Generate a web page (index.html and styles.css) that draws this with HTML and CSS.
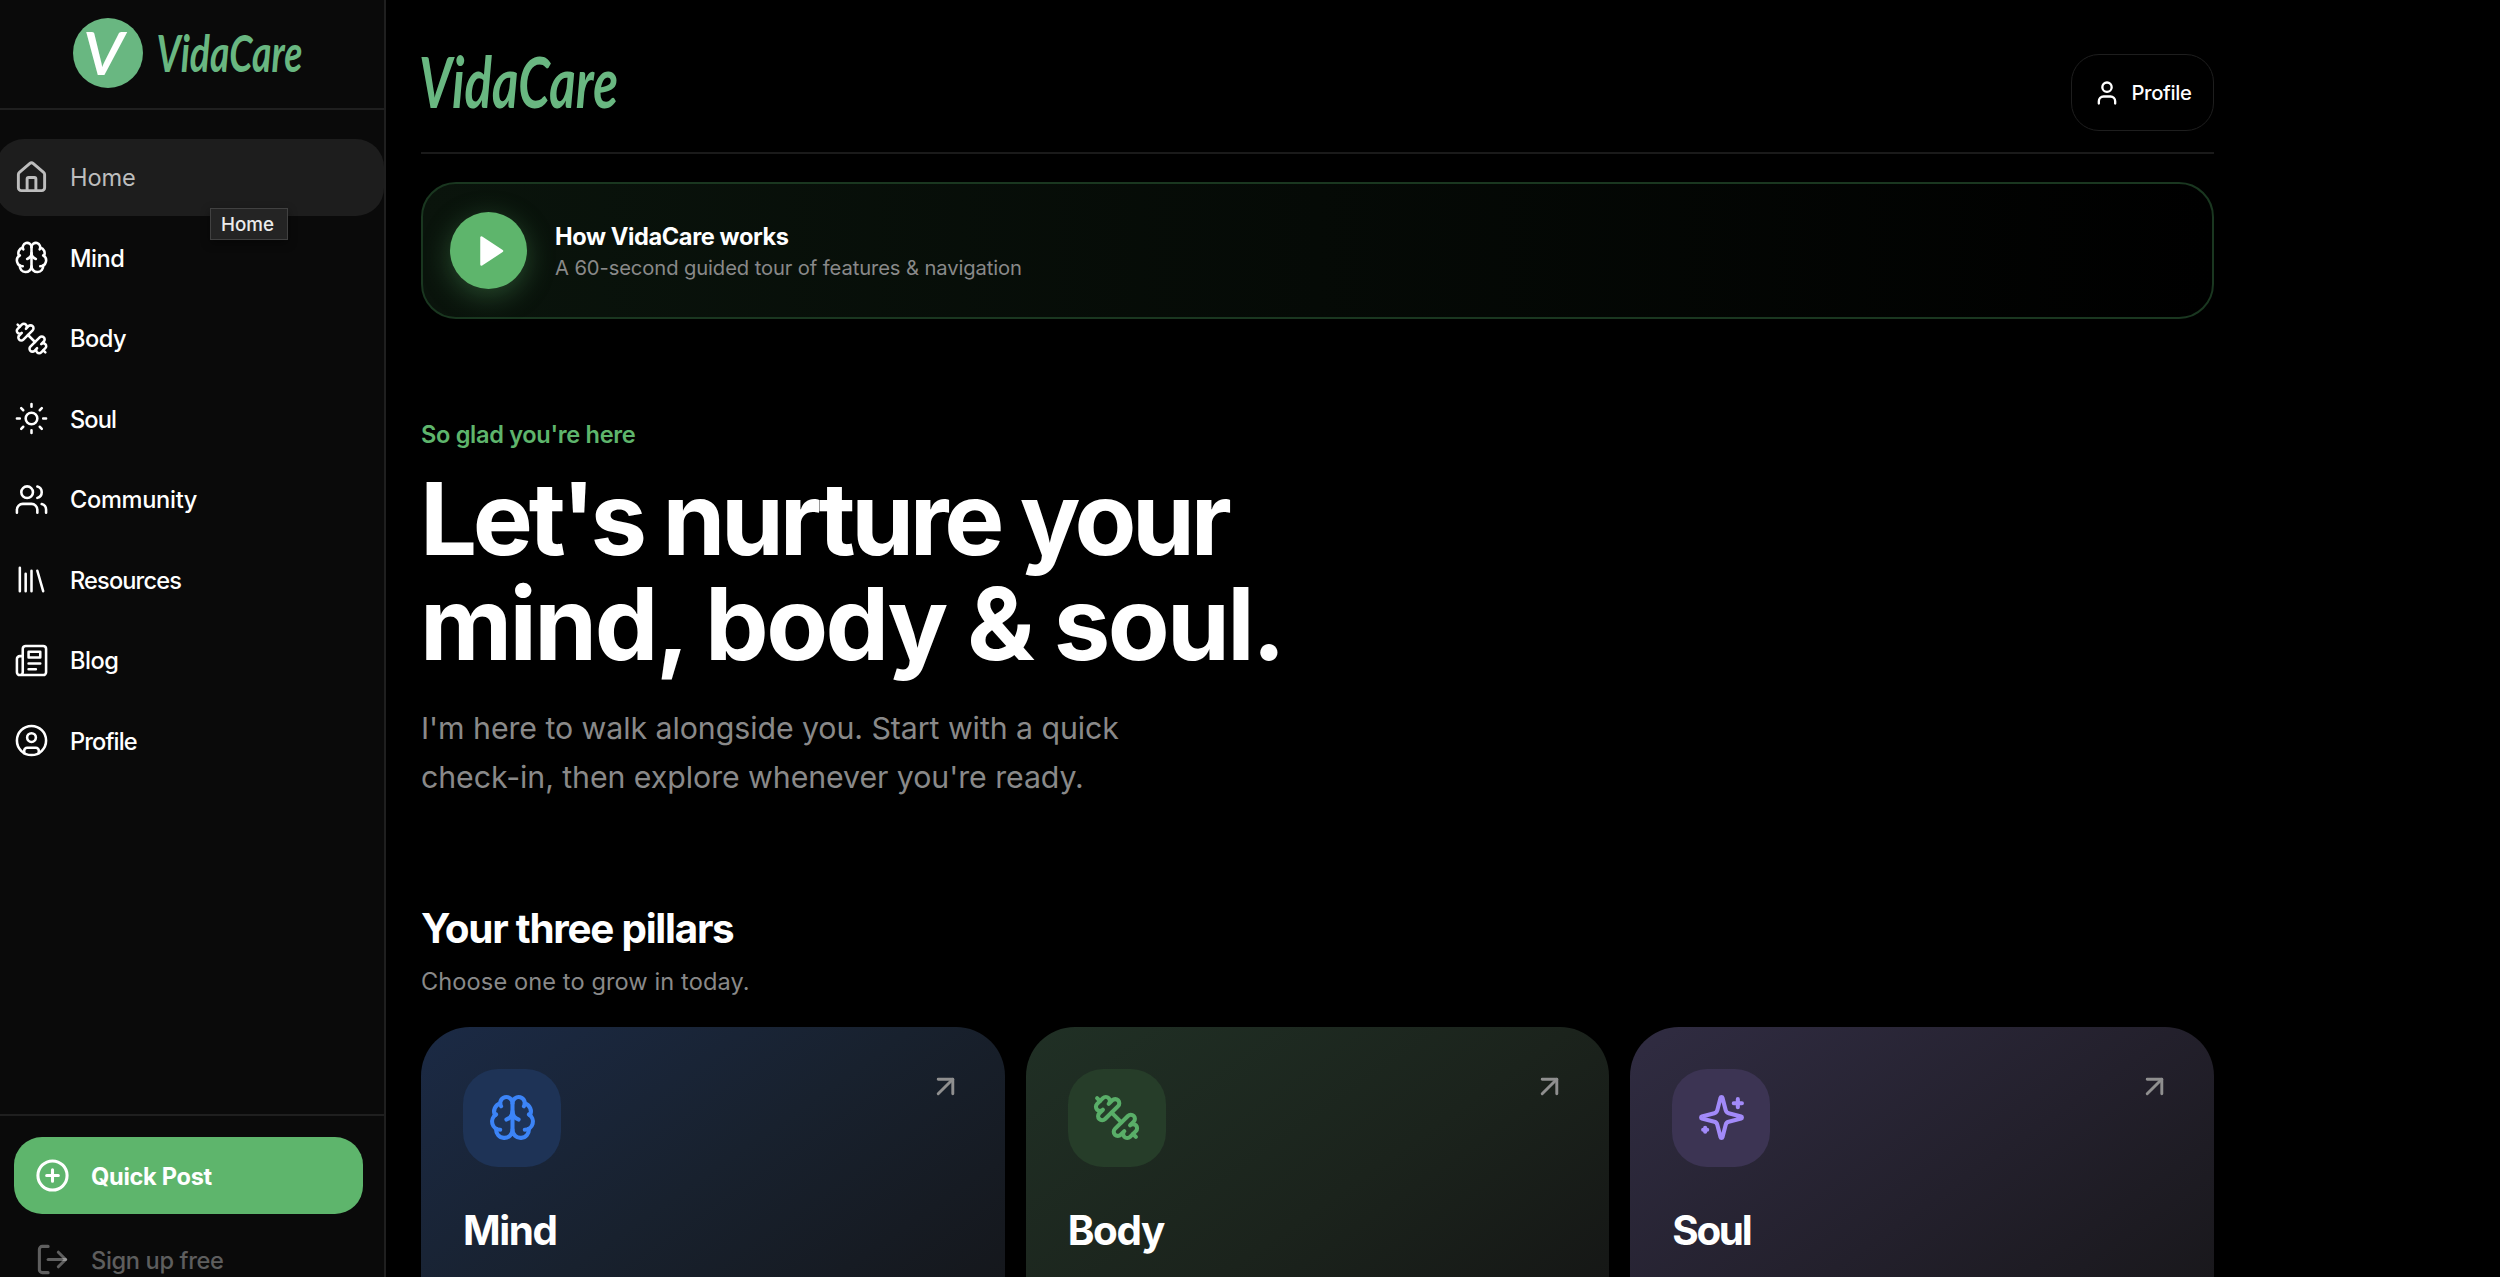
FILE: index.html
```html
<!DOCTYPE html>
<html lang="en">
<head>
<meta charset="utf-8">
<title>VidaCare</title>
<link rel="stylesheet" href="styles.css">
</head>
<body>
<svg class="sprite" aria-hidden="true">
  <symbol id="brain" viewBox="0 0 24 24"><path d="M12 18V5"/><path d="M15 13a4.17 4.17 0 0 1-3-4 4.17 4.17 0 0 1-3 4"/><path d="M17.598 6.5A3 3 0 1 0 12 5a3 3 0 1 0-5.598 1.5"/><path d="M17.997 5.125a4 4 0 0 1 2.526 5.77"/><path d="M18 18a4 4 0 0 0 2-7.464"/><path d="M19.967 17.483A4 4 0 1 1 12 18a4 4 0 1 1-7.967-.517"/><path d="M6 18a4 4 0 0 1-2-7.464"/><path d="M6.003 5.125a4 4 0 0 0-2.526 5.77"/></symbol>
  <symbol id="dumbbell" viewBox="0 0 24 24"><path d="M14.4 14.4 9.6 9.6"/><path d="M18.657 21.485a2 2 0 1 1-2.829-2.828l-1.767 1.768a2 2 0 1 1-2.829-2.829l6.364-6.364a2 2 0 1 1 2.829 2.829l-1.768 1.767a2 2 0 1 1 2.828 2.829z"/><path d="m21.5 21.5-1.4-1.4"/><path d="M3.9 3.9 2.5 2.5"/><path d="M6.404 12.768a2 2 0 1 1-2.829-2.829l1.768-1.767a2 2 0 1 1-2.828-2.829l2.828-2.828a2 2 0 1 1 2.829 2.828l1.767-1.768a2 2 0 1 1 2.829 2.829z"/></symbol>
  <symbol id="arrow" viewBox="0 0 24 24"><path d="M7 7h10v10"/><path d="M7 17 17 7"/></symbol>
</svg>
<div class="app">
  <aside class="sidebar">
    <div class="brand">
      <svg class="brand-mark" viewBox="0 0 70 70"><circle cx="35" cy="35" r="35"/><text x="10" y="57" textLength="41" lengthAdjust="spacingAndGlyphs">V</text></svg>
      <svg class="brand-word" viewBox="0 0 198 60"><text x="-2" y="54" textLength="199" lengthAdjust="spacingAndGlyphs">VidaCare</text></svg>
    </div>
    <nav class="nav">
      <a class="nav-item active"><svg class="icon" viewBox="0 0 24 24"><path d="M15 21v-8a1 1 0 0 0-1-1h-4a1 1 0 0 0-1 1v8"/><path d="M3 10a2 2 0 0 1 .709-1.528l7-5.999a2 2 0 0 1 2.582 0l7 5.999A2 2 0 0 1 21 10v9a2 2 0 0 1-2 2H5a2 2 0 0 1-2-2z"/></svg><span>Home</span></a>
      <a class="nav-item"><svg class="icon"><use href="#brain"/></svg><span>Mind</span></a>
      <a class="nav-item"><svg class="icon"><use href="#dumbbell"/></svg><span>Body</span></a>
      <a class="nav-item"><svg class="icon" viewBox="0 0 24 24"><circle cx="12" cy="12" r="4"/><path d="M12 2v2M12 20v2M4.93 4.93l1.41 1.41M17.66 17.66l1.41 1.41M2 12h2M20 12h2M6.34 17.66l-1.41 1.41M19.07 4.93l-1.41 1.41"/></svg><span class="tight">Soul</span></a>
      <a class="nav-item"><svg class="icon" viewBox="0 0 24 24"><path d="M16 21v-2a4 4 0 0 0-4-4H6a4 4 0 0 0-4 4v2"/><circle cx="9" cy="7" r="4"/><path d="M22 21v-2a4 4 0 0 0-3-3.87"/><path d="M16 3.13a4 4 0 0 1 0 7.75"/></svg><span class="wide">Community</span></a>
      <a class="nav-item"><svg class="icon" viewBox="0 0 24 24"><path d="m16 6 4 14M12 6v14M8 8v12M4 4v16"/></svg><span class="tight">Resources</span></a>
      <a class="nav-item"><svg class="icon" viewBox="0 0 24 24"><path d="M4 22h16a2 2 0 0 0 2-2V4a2 2 0 0 0-2-2H8a2 2 0 0 0-2 2v16a2 2 0 0 1-2 2Zm0 0a2 2 0 0 1-2-2v-9c0-1.1.9-2 2-2h2"/><path d="M18 14h-8M15 18h-5M10 6h8v4h-8V6Z"/></svg><span>Blog</span></a>
      <a class="nav-item"><svg class="icon" viewBox="0 0 24 24"><circle cx="12" cy="12" r="10"/><circle cx="12" cy="10" r="3"/><path d="M7 20.662V19a2 2 0 0 1 2-2h6a2 2 0 0 1 2 2v1.662"/></svg><span class="tight">Profile</span></a>
    </nav>
    <div class="tooltip">Home</div>
    <div class="sidebar-foot">
      <a class="foot-item quick"><svg class="icon" viewBox="0 0 24 24"><circle cx="12" cy="12" r="10"/><path d="M8 12h8M12 8v8"/></svg><span>Quick Post</span></a>
      <a class="foot-item signup"><svg class="icon" viewBox="0 0 24 24"><path d="m16 17 5-5-5-5"/><path d="M21 12H9"/><path d="M9 21H5a2 2 0 0 1-2-2V5a2 2 0 0 1 2-2h4"/></svg><span>Sign up free</span></a>
    </div>
  </aside>
  <main class="main">
    <header class="topbar">
      <svg class="wordmark" viewBox="0 0 198 60"><text x="-2" y="54" textLength="199" lengthAdjust="spacingAndGlyphs">VidaCare</text></svg>
      <a class="profile-btn"><svg class="icon" viewBox="0 0 24 24"><path d="M19 21v-2a4 4 0 0 0-4-4H9a4 4 0 0 0-4 4v2"/><circle cx="12" cy="7" r="4"/></svg><span>Profile</span></a>
    </header>
    <section class="tour">
      <div class="play"><svg viewBox="0 0 77 77"><path d="M31.5 25.5v27L52 39z"/></svg></div>
      <div class="tour-text">
        <h3>How VidaCare works</h3>
        <p>A 60-second guided tour of features &amp; navigation</p>
      </div>
    </section>
    <section class="hero">
      <p class="eyebrow">So glad you're here</p>
      <h1><span class="line-a">Let's nurture your</span><span class="line-b">mind, body &amp; soul.</span></h1>
      <p class="lead">I'm here to walk alongside you. Start with a quick<br>check-in, then explore whenever you're ready.</p>
    </section>
    <section class="pillars">
      <h2>Your three pillars</h2>
      <p class="hint">Choose one to grow in today.</p>
      <div class="cards">
        <article class="card mind">
          <div class="card-top"><div class="tile"><svg class="icon"><use href="#brain"/></svg></div><svg class="icon go"><use href="#arrow"/></svg></div>
          <h3>Mind</h3>
        </article>
        <article class="card body">
          <div class="card-top"><div class="tile"><svg class="icon"><use href="#dumbbell"/></svg></div><svg class="icon go"><use href="#arrow"/></svg></div>
          <h3>Body</h3>
        </article>
        <article class="card soul">
          <div class="card-top"><div class="tile"><svg class="icon" viewBox="0 0 24 24"><path d="M9.937 15.5A2 2 0 0 0 8.5 14.063l-6.135-1.582a.5.5 0 0 1 0-.962L8.5 9.936A2 2 0 0 0 9.937 8.5l1.582-6.135a.5.5 0 0 1 .963 0L14.063 8.5A2 2 0 0 0 15.5 9.937l6.135 1.581a.5.5 0 0 1 0 .964L15.5 14.063a2 2 0 0 0-1.437 1.437l-1.582 6.135a.5.5 0 0 1-.963 0z"/><path d="M20 3v4M22 5h-4M4 17v2M5 18H3"/></svg></div><svg class="icon go"><use href="#arrow"/></svg></div>
          <h3>Soul</h3>
        </article>
      </div>
    </section>
  </main>
</div>
</body>
</html>
```
FILE: styles.css
```css
* { box-sizing: border-box; margin: 0; padding: 0; }
body {
  background: #000;
  color: #fff;
  font-family: Inter, "Liberation Sans", sans-serif;
  overflow: hidden;
}
.sprite { display: none; }
.app { display: flex; height: 1277px; overflow: hidden; }
.icon {
  width: 35px;
  height: 35px;
  flex: none;
  fill: none;
  stroke: currentColor;
  stroke-width: 1.75;
  stroke-linecap: round;
  stroke-linejoin: round;
}

.sidebar {
  position: relative;
  display: flex;
  flex-direction: column;
  flex: none;
  width: 386px;
  height: 1277px;
  background: #0a0a0a;
  border-right: 2px solid #1f1f1f;
}
.brand {
  display: flex;
  flex: none;
  height: 110px;
  padding: 18px 0 0 73px;
  gap: 14px;
  border-bottom: 2px solid #1f1f1f;
}
.brand-mark { width: 70px; height: 70px; }
.brand-mark circle { fill: #69b781; }
.brand-mark text { fill: #fff; font: italic 600 60px Lato, sans-serif; }
.brand-word { width: 147px; height: 44px; margin-top: 14px; }
.brand-word text, .wordmark text { fill: #69b781; font: italic 700 70px Lato, sans-serif; }
.brand-word, .wordmark { overflow: visible; }

.nav { display: flex; flex-direction: column; gap: 3.5px; padding-top: 28.5px; }
.nav-item {
  display: flex;
  align-items: center;
  height: 77px;
  margin-left: -4px;
  padding-left: 18px;
  gap: 21px;
  border-radius: 28px;
  font-size: 23.6px;
  font-weight: 500;
  letter-spacing: -0.02em;
}
.nav-item span { padding-top: 1px; }
.nav-item .tight { letter-spacing: -0.037em; }
.nav-item .wide { letter-spacing: -0.013em; }
.nav-item.active { background: #1d1d1d; color: #bdbdbd; font-weight: 400; letter-spacing: -0.005em; }
.active .icon { stroke-width: 2; }
.tooltip {
  position: absolute;
  left: 210px;
  top: 208px;
  width: 78px;
  height: 32px;
  border: 1px solid #414141;
  background: #242424;
  color: #ececec;
  font-size: 18.8px;
  font-weight: 500;
  line-height: 31px;
  padding-right: 3px;
  text-align: center;
  box-shadow: 0 3px 10px rgba(0, 0, 0, .4);
}
.sidebar-foot {
  display: flex;
  flex-direction: column;
  flex: none;
  height: 163px;
  margin-top: auto;
  padding: 21px 21px 0 14px;
  gap: 7px;
  border-top: 2px solid #1f1f1f;
  overflow: hidden;
}
.foot-item {
  display: flex;
  align-items: center;
  flex: none;
  height: 77px;
  padding-left: 21px;
  gap: 21px;
  border-radius: 28px;
  font-size: 23.6px;
  font-weight: 500;
}
.foot-item .icon { stroke-width: 2.1; }
.foot-item span { padding-top: 1px; }
.quick { background: #5eb56c; font-weight: 700; letter-spacing: -0.013em; }
.signup { color: rgba(255, 255, 255, .35); letter-spacing: -0.0145em; }

.main { width: 1828px; padding: 54px 0 0 35px; }
.topbar {
  display: flex;
  justify-content: space-between;
  height: 100px;
  border-bottom: 2px solid #1a1a1a;
}
.wordmark { width: 198px; height: 60px; }
.profile-btn {
  display: flex;
  align-items: center;
  width: 143px;
  height: 77px;
  padding-left: 21px;
  gap: 10.5px;
  border: 1.75px solid #1e1e1e;
  border-radius: 28px;
  font-size: 20.2px;
  font-weight: 500;
  letter-spacing: -0.017em;
}
.profile-btn .icon { width: 28px; height: 28px; stroke-width: 2; }

.tour {
  display: flex;
  align-items: center;
  height: 137px;
  margin-top: 28px;
  padding-left: 27px;
  gap: 28px;
  border: 2px solid #1a3720;
  border-radius: 35px;
  background: linear-gradient(90deg, #0a140c, #000);
}
.play {
  width: 77px;
  height: 77px;
  border-radius: 50%;
  background: #5eb56c;
  box-shadow: 0 7px 28px rgba(94, 181, 108, .35);
}
.play svg { display: block; }
.play path { fill: #fff; stroke: #fff; stroke-width: 2.5; stroke-linejoin: round; }
.tour-text { padding-top: 3px; }
.tour h3 { font-size: 23.6px; line-height: 31px; letter-spacing: -0.017em; }
.tour p { color: #898989; font-size: 20.2px; line-height: 31px; letter-spacing: -0.005em; }

.hero { padding-top: 98px; }
.eyebrow { color: #5eb56c; font-size: 23.6px; font-weight: 600; line-height: 35px; letter-spacing: -0.014em; }
h1 { margin: 14px 0 28px -1px; font-size: 101px; line-height: 105px; }
h1 span { display: block; white-space: nowrap; }
.line-a { letter-spacing: -0.0424em; }
.line-b { letter-spacing: -0.0257em; }
.lead { color: #898989; font-size: 30.3px; line-height: 49px; letter-spacing: -0.002em; }

.pillars { padding-top: 102px; }
h2 { font-size: 40.4px; line-height: 50px; letter-spacing: -0.031em; }
.hint { margin-top: 10px; color: #898989; font-size: 23.6px; line-height: 35px; letter-spacing: 0.004em; }
.cards { display: grid; grid-template-columns: repeat(3, 1fr); gap: 21px; margin-top: 27.5px; }
.card { height: 360px; padding: 42px; border-radius: 49px; }
.card-top { display: flex; justify-content: space-between; color: #8f8f8f; }
.card .go { stroke-width: 2; }
.tile {
  display: flex;
  align-items: center;
  justify-content: center;
  width: 98px;
  height: 98px;
  border-radius: 35px;
}
.tile .icon { width: 49px; height: 49px; stroke-width: 2; }
.card h3 { margin-top: 39px; font-size: 40.4px; line-height: 50px; letter-spacing: -0.034em; }
.card.soul h3 { letter-spacing: -0.058em; }
.mind { background: linear-gradient(145deg, #1b2a45, #18212e 45%, #141518 95%); }
.mind .tile { background: #1e3356; color: #3c84f7; }
.body { background: linear-gradient(145deg, #203025, #1b231c 50%, #141414 95%); }
.body .tile { background: #263d29; color: #59ae68; }
.soul { background: linear-gradient(145deg, #302c42, #23202c 50%, #18171a 90%); }
.soul .tile { background: #3c3453; color: #a28af9; }
```
